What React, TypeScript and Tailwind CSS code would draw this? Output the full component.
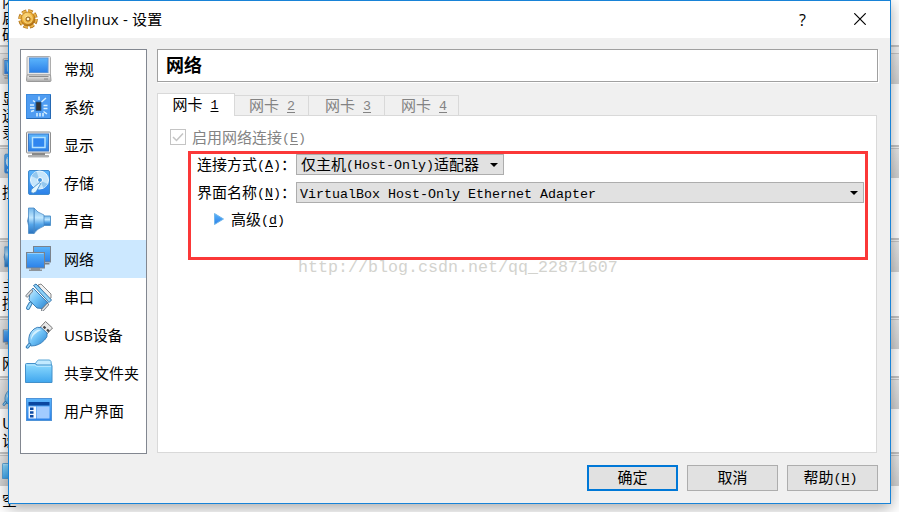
import type { ReactNode } from 'react'
import { clsx } from 'clsx'

interface Section {
  label: string
  icon: ReactNode
}

interface BackdropGroup {
  header: string
  body: string
  lines: string[]
  icon?: ReactNode
}

function Gradients() {
  return (
    <svg className="absolute h-0 w-0" aria-hidden="true">
      <defs>
        <linearGradient id="screen" x1="0" y1="0" x2="0" y2="1">
          <stop offset="0" stopColor="#5bb5fc" />
          <stop offset="1" stopColor="#2b80e8" />
        </linearGradient>
        <linearGradient id="sky" x1="0" y1="0" x2="0" y2="1">
          <stop offset="0" stopColor="#8fdcff" />
          <stop offset="1" stopColor="#3fa6ee" />
        </linearGradient>
        <linearGradient id="cone" x1="0" y1="0" x2="0" y2="1">
          <stop offset="0" stopColor="#6fb4ea" />
          <stop offset="0.38" stopColor="#c2e8ff" />
          <stop offset="0.65" stopColor="#55a6ea" />
          <stop offset="1" stopColor="#2a72be" />
        </linearGradient>
        <linearGradient id="plug" x1="0" y1="0" x2="1" y2="1">
          <stop offset="0" stopColor="#d0f0ff" />
          <stop offset="0.5" stopColor="#6cc0f6" />
          <stop offset="1" stopColor="#2a80cc" />
        </linearGradient>
        <linearGradient id="metal" x1="0" y1="0" x2="0" y2="1">
          <stop offset="0" stopColor="#f4f4f4" />
          <stop offset="1" stopColor="#a9a9a9" />
        </linearGradient>
        <radialGradient id="gold" cx="0.4" cy="0.3" r="0.75">
          <stop offset="0" stopColor="#ffe9a0" />
          <stop offset="0.55" stopColor="#eead34" />
          <stop offset="1" stopColor="#9a5a08" />
        </radialGradient>
      </defs>
    </svg>
  )
}

function Icon({ children, className = 'h-7 w-7' }: { children: ReactNode; className?: string }) {
  return (
    <svg viewBox="0 0 28 28" className={clsx('shrink-0', className)}>
      {children}
    </svg>
  )
}

const general = (
  <>
    <path d="M3 1.500h21.500q1 0 1 1V20h-23.500V2.500q0-1 1-1z" fill="#e8e8e8" stroke="#adadad" />
    <rect x="4.500" y="3" width="18.500" height="14.500" fill="url(#screen)" stroke="#5a94d8" />
    <path d="M2 20h23.500l.5 5.500q0 1-1 1H2.500q-1 0-1-1z" fill="url(#metal)" stroke="#999" />
    <path d="M4 21.500h19.500M19 24h4" stroke="#777" strokeWidth=".8" />
  </>
)

const system = (
  <>
    <rect x="1.500" y="1.500" width="24" height="24" fill="#4e9cf2" stroke="#3b8ade" />
    <path d="M2 25.500h23.500V2" fill="none" stroke="#2568b2" />
    <rect x="11" y="9" width="5" height="8.500" fill="#353535" stroke="#20558c" strokeWidth=".8" />
    <path
      d="M14 3.500v3.500M21 5l-4.500 4M5 12h4M5 15h4.500M18.500 12.500h4M18.500 15.500h4M8 7.500l2 1.500M6 18.500l3-1M18.500 18.500l3.500 2.500M12 20v3.500M15 20v3.500M18 20v3.500"
      stroke="#d9f1ff"
      strokeWidth="1.500"
    />
  </>
)

const display = (
  <>
    <rect x="1.500" y="1" width="24" height="21" rx="1" fill="#ececec" stroke="#8f8f8f" />
    <rect x="3.500" y="3" width="20" height="17" fill="url(#screen)" stroke="#3a78c8" />
    <rect x="7.500" y="6.500" width="12.500" height="10" fill="#2f86f0" stroke="#b4e2ff" strokeWidth="1.500" />
    <path d="M7 22h13v2H7z" fill="#888" />
    <path d="M3.500 24.500h20v1.500h-20z" fill="#c4c4c4" stroke="#888" strokeWidth=".6" />
  </>
)

const storage = (
  <>
    <rect x="3.500" y="1.500" width="21" height="24" rx="1.500" fill="url(#screen)" stroke="#3f8ace" />
    <circle cx="14.500" cy="11" r="9" fill="#c6e6fb" stroke="#eefaff" />
    <path d="M14.500 11l-8-4a9 9 0 0 1 5-4.500zM14.500 11l8 4a9 9 0 0 1-4 4z" fill="#93c7ee" />
    <circle cx="15" cy="11" r="2.500" fill="#4396dd" stroke="#fff" />
    <path d="M14.500 13.500l1 1.500-4.500 8q-2.500 2-5 .5-.5-3 2-4.500z" fill="#e5f7ff" stroke="#3c88c6" strokeWidth=".8" />
  </>
)

const audio = (
  <>
    <path d="M3.500 10h2v8h-2q-1.500-4 0-8z" fill="#5fa8e4" stroke="#3a78b4" />
    <path d="M18.500 9h7v9.500h-7z" fill="url(#cone)" stroke="#5596cc" />
    <path d="M9 1q3 4.500 10 7v11q-7 2.500-10 7.500z" fill="url(#cone)" stroke="#4a8cc6" strokeWidth=".8" />
    <path d="M3.500 1H9v25.500H3.500z" fill="url(#cone)" stroke="#4a8cc6" strokeWidth=".8" />
  </>
)

const network = (
  <>
    <rect x="8.500" y="1.500" width="17" height="15.500" fill="url(#screen)" stroke="#7b828b" />
    <path d="M18 18h6.500v1.500H18z" fill="#777e86" />
    <rect x="1.500" y="7.500" width="18" height="15.500" fill="url(#screen)" stroke="#7b828b" />
    <path d="M2.500 8.500h16" stroke="#92d0ff" />
    <path d="M6 23h9v1.500H6zM4 24.500h13V26H4z" fill="#8d9399" />
  </>
)

const serial = (
  <>
    <path d="M13 2l3-1 10 10v4l-3 1.500z" fill="#f0f0f0" stroke="#888" />
    <path d="M8 5l15 15-6 5.500-5-.5L4 17l1-8z" fill="url(#plug)" stroke="#3f7db2" />
    <path d="M8.500 2.500l2.500-1.500 15.500 16-2.500 2.500z" fill="#8cd2fa" stroke="#3573a8" />
    <path d="M6.500 8L2 13M22.500 21.500L17.500 27" stroke="#777d84" strokeWidth="3" strokeLinecap="round" />
    <path d="M6.500 8L2 13M22.500 21.500L17.500 27" stroke="#e4e8eb" strokeWidth="1.300" strokeLinecap="round" />
    <path d="M5.500 20.500L3 25" stroke="#397eb5" strokeWidth="4" strokeLinecap="round" />
    <path d="M5.500 20.500L3 25" stroke="#9edbff" strokeWidth="2" strokeLinecap="round" />
  </>
)

const usb = (
  <>
    <path d="M15 6.500l5.500-6 7 6.500-5.500 6z" fill="#e8e8e8" stroke="#777" />
    <path d="M18.500 5.500l2 1.800M22 8.500l2 1.800" stroke="#444" strokeWidth="2.300" />
    <path d="M4 22Q2.500 13 9 8q3-2.500 7-1.500l6 5.500q1 4-2.500 7Q14 25 6 25z" fill="url(#plug)" stroke="#3d82bc" />
    <path d="M6 19q0-7 6-10 2-1 4 0Q8 13 6 19z" fill="#d5f1ff" />
    <path d="M4.500 23.500l-2 2.500" stroke="#337db8" strokeWidth="3.500" strokeLinecap="round" />
    <path d="M4.500 23.500l-2 2.500" stroke="#8fcef5" strokeWidth="1.500" strokeLinecap="round" />
  </>
)

const folder = (
  <>
    <path d="M10 5l2.500-3.500q.5-.5 1.500-.5h10q1.500 0 2 1.500L26.500 6v6H10z" fill="#c2eaff" stroke="#5ba6d6" />
    <path d="M.5 5.500q0-1 1-1h8.500l2 1.500h14.500q.5 0 .5 1v16.500H.5z" fill="url(#sky)" stroke="#4390ca" />
    <path d="M1.500 6h8.500l1.500 1.300H26" fill="none" stroke="#bde8ff" />
  </>
)

const ui = (
  <>
    <rect x="1.500" y="1.500" width="25" height="22" fill="url(#screen)" stroke="#4f93d8" />
    <rect x="3.500" y="5" width="21" height="3.500" fill="#0a47a0" />
    <rect x="3.500" y="9.500" width="7.500" height="12" fill="#f3f8ff" />
    <rect x="11.500" y="9.500" width="13" height="12" fill="#a2cbff" />
    <path d="M5 10.500h3.500V13H5zM5 14.200h3.500v2.500H5zM5 18h3.500v2.500H5z" fill="#0c4aa5" />
  </>
)

const sections: Section[] = [
  { label: '常规', icon: general },
  { label: '系统', icon: system },
  { label: '显示', icon: display },
  { label: '存储', icon: storage },
  { label: '声音', icon: audio },
  { label: '网络', icon: network },
  { label: '串口', icon: serial },
  { label: 'USB设备', icon: usb },
  { label: '共享文件夹', icon: folder },
  { label: '用户界面', icon: ui },
]

// Manager window that stays visible along the edges of the dialog
const backdrop: BackdropGroup[] = [
  { header: 'h-0', body: 'h-[45px]', lines: ['内', '启', '硬'] },
  { header: 'h-[30px]', body: 'h-[61px]', lines: ['显', '远', '录'], icon: display },
  { header: 'h-[29px]', body: 'h-[60px]', lines: ['控'], icon: storage },
  { header: 'h-[30px]', body: 'h-[44px]', lines: ['主', '控'], icon: audio },
  { header: 'h-[29px]', body: 'h-[27px]', lines: ['网'], icon: network },
  { header: 'h-[29px]', body: 'h-[43px]', lines: ['U', '设'], icon: usb },
  { header: 'h-[30px]', body: 'h-[40px]', lines: ['空'], icon: folder },
]

function Backdrop() {
  return (
    <div className="absolute inset-0 flex flex-col overflow-hidden bg-[#f0f0f0]">
      {backdrop.map((group, i) => (
        <div
          key={i}
          className={clsx(
            'shrink-0 border-b-2 border-[#c4c4c4]',
            i === 0 ? 'mb-[6px]' : 'mb-px border-t border-t-[#c4c4c4]',
          )}
        >
          <div
            className={clsx(
              'flex items-center overflow-hidden bg-linear-to-b from-[#e6e6e6] to-[#d0d0d0] pl-0.5',
              group.header,
            )}
          >
            {group.icon && <Icon className="h-[22px] w-[22px]">{group.icon}</Icon>}
          </div>
          <div className={clsx('bg-white pl-0.5 text-[15px] leading-[17px]', group.body, i > 0 && 'pt-[5px]')}>
            {group.lines.map((line, n) => (
              <p key={line} className={clsx(i === 0 && n === 0 && 'flex h-2 items-end leading-none')}>
                {line}
              </p>
            ))}
          </div>
        </div>
      ))}
    </div>
  )
}

function Latin({ children }: { children: ReactNode }) {
  return (
    <span className="whitespace-pre align-[1px] font-['Liberation_Mono',monospace] text-[13.33px]">{children}</span>
  )
}

function Hotkey({ letter }: { letter: string }) {
  return (
    <Latin>
      (<span className="underline underline-offset-2">{letter}</span>)
    </Latin>
  )
}

function FieldLabel({ text, letter }: { text: string; letter: string }) {
  return (
    <span className="-ml-px w-[99px] shrink-0 whitespace-nowrap">
      {text}
      <Hotkey letter={letter} />
      <span>：</span>
    </span>
  )
}

function ComboArrow() {
  return (
    <svg viewBox="0 0 8 4" className="h-1 w-2 shrink-0">
      <path d="M0 0h8L4 4z" fill="#000" />
    </svg>
  )
}

function GearIcon() {
  return (
    <svg viewBox="0 0 20 20" className="-mt-0.5 h-5 w-5 shrink-0">
      <circle cx="10" cy="10" r="8" fill="none" stroke="#a9690e" strokeWidth="3.600" strokeDasharray="4.400 1.883" />
      <circle cx="10" cy="10" r="7.800" fill="none" stroke="#e9b24a" strokeWidth="2.600" strokeDasharray="3.900 2.226" />
      <circle cx="10" cy="10" r="7" fill="url(#gold)" stroke="#a86b12" strokeWidth=".6" />
      <circle cx="10" cy="10" r="4.200" fill="none" stroke="#f6cf70" strokeWidth="1.200" />
      <circle cx="10" cy="10" r="2" fill="#fff4cf" stroke="#8b540a" />
    </svg>
  )
}

function TitleBar() {
  return (
    <header className="flex h-[37px] items-center bg-white pl-[9px] text-[15px]">
      <GearIcon />
      <h1 className="ml-[5px] flex-1 font-['Open_Sans','Noto_Sans_CJK_SC',sans-serif] tracking-[0.2px]">
        shellylinux - 设置
      </h1>
      <button className="w-[57px] font-['Open_Sans',sans-serif] text-base">?</button>
      <button className="-mt-px flex w-[59px] justify-center pr-px" aria-label="close">
        <svg viewBox="0 0 12 12" className="h-3 w-3">
          <path d="M.3.3l11.400 11.400M11.700.3L.3 11.700" stroke="#000" strokeWidth="1.200" />
        </svg>
      </button>
    </header>
  )
}

function Sidebar() {
  return (
    <nav className="h-[405px] w-[127px] border border-[#828790] bg-white font-['Open_Sans','Noto_Sans_CJK_SC',sans-serif] text-[15px]">
      {sections.map((section) => (
        <div
          key={section.label}
          className={clsx('flex h-[38px] items-center gap-[11px] pl-1', section.label === '网络' && 'bg-[#cce8ff]')}
        >
          <Icon>{section.icon}</Icon>
          <span className="whitespace-nowrap">{section.label}</span>
        </div>
      ))}
    </nav>
  )
}

function TabLabel({ n }: { n: number }) {
  return (
    <span className="whitespace-nowrap">
      网卡
      <Latin>
        {' '}
        <span className="underline underline-offset-2">{n}</span>
      </Latin>
    </span>
  )
}

function Tabs() {
  return (
    <div className="relative z-10 -mb-px flex h-[23px] items-end">
      <div className="flex h-[23px] w-[78px] items-center justify-center border border-b-0 border-[#d9d9d9] bg-white pb-px pr-px">
        <TabLabel n={1} />
      </div>
      {[2, 3, 4].map((n) => (
        <div
          key={n}
          className={clsx(
            'flex h-[21px] items-center border border-l-0 border-[#d9d9d9] text-[#838383]',
            n === 2 && 'w-[74px] pl-[14px]',
            n === 3 && 'w-[76px] pl-4',
            n === 4 && 'w-[74px] pl-4',
          )}
        >
          <TabLabel n={n} />
        </div>
      ))}
    </div>
  )
}

function AdapterPane() {
  return (
    <div className="h-[338px] w-[720px] border border-[#d9d9d9] bg-white pl-3 pt-[13px]">
      <label className="flex h-4 items-center text-[#838383]">
        <span className="mr-[6px] flex h-4 w-4 items-center justify-center border border-[#c4c4c4]">
          <svg viewBox="0 0 12 12" className="h-3 w-3">
            <path d="M1 6l3.500 3.500L11 2.500" fill="none" stroke="#c4c4c4" strokeWidth="1.500" />
          </svg>
        </span>
        <span>
          启用网络连接
          <Hotkey letter="E" />
        </span>
      </label>

      <div className="ml-[18px] mt-[6px] h-[109px] w-[680px] border-[3px] border-[#fb3838] pl-[7px]">
        <div className="flex h-[21px] items-center">
          <FieldLabel text="连接方式" letter="A" />
          <div className="flex h-[21px] w-52 items-center justify-between border border-[#adadad] bg-[#e1e1e1] pl-1 pr-[5px]">
            <span>
              仅主机<Latin>(Host-Only)</Latin>适配器
            </span>
            <ComboArrow />
          </div>
        </div>
        <div className="mt-[7px] flex h-[21px] items-center">
          <FieldLabel text="界面名称" letter="N" />
          <div className="flex h-[21px] w-[568px] items-center justify-between border border-[#adadad] bg-[#e1e1e1] pl-[3px] pr-[5px]">
            <span className="pt-px">
              <Latin>VirtualBox Host-Only Ethernet Adapter</Latin>
            </span>
            <ComboArrow />
          </div>
        </div>
        <div className="mt-[5px] flex h-[22px] items-center pl-4">
          <svg viewBox="0 0 10 12" className="-mt-px mr-[7px] h-3 w-[10px]">
            <path d="M.5.5L9.500 6l-9 5.500z" fill="url(#screen)" stroke="#72b6ea" />
          </svg>
          <span>
            高级
            <Hotkey letter="d" />
          </span>
        </div>
      </div>

      <p className="-mt-[3px] ml-[128px] font-['Liberation_Mono',monospace] text-[16.66px] leading-[22px] text-[#d3d3ce]">
        http://blog.csdn.net/qq_22871607
      </p>
    </div>
  )
}

function Footer() {
  const button = 'flex h-[26px] w-[91px] items-center justify-center bg-[#e1e1e1]'
  return (
    <footer className="mt-[11px] flex justify-end gap-[9px] pr-3">
      <button className={clsx(button, 'border-2 border-[#0078d7] pb-[3px]')}>确定</button>
      <button className={clsx(button, 'border border-[#adadad] pb-[3px]')}>取消</button>
      <button className={clsx(button, 'border border-[#adadad] pb-px pr-1')}>
        <span>
          帮助
          <Hotkey letter="H" />
        </span>
      </button>
    </footer>
  )
}

export default function App() {
  return (
    <div className="relative h-[512px] w-[899px] overflow-hidden font-['Noto_Sans_CJK_SC',sans-serif] text-[15px] leading-none text-black">
      <Gradients />
      <Backdrop />
      <div className="absolute left-2 top-0 h-[504px] w-[883px] border border-[#1883d7] bg-[#f0f0f0] shadow-[0_4px_14px_rgba(0,0,0,0.35)]">
        <TitleBar />
        <div className="mt-[11px] flex gap-[10px] pl-[11px]">
          <Sidebar />
          <main>
            <h2 className="flex h-[33px] w-[721px] items-center border border-[#a0a0a0] bg-white pb-[3px] pl-2 text-lg font-bold leading-none shadow-[1px_1px_0_#fff]">
              网络
            </h2>
            <div className="mt-[11px]">
              <Tabs />
              <AdapterPane />
            </div>
          </main>
        </div>
        <Footer />
      </div>
    </div>
  )
}
